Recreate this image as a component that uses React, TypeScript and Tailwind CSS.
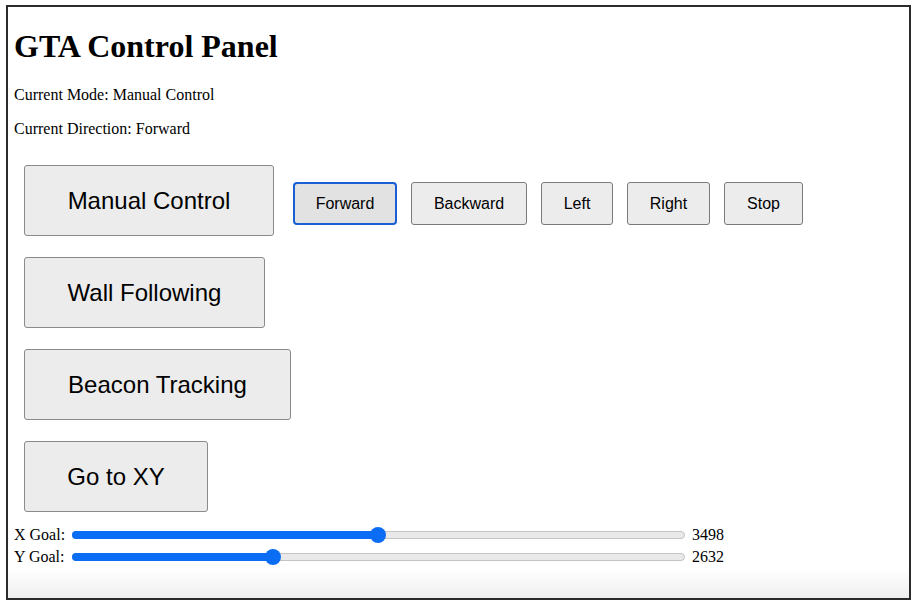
import { useState } from 'react';

interface GoalSlider {
  label: string;
  value: number;
  max: number;
}

const modes = [
  { label: 'Manual Control', width: 'w-[250px]' },
  { label: 'Wall Following', width: 'w-[241px]' },
  { label: 'Beacon Tracking', width: 'w-[267px]' },
  { label: 'Go to XY', width: 'w-[184px]' },
];

const directions = [
  { label: 'Forward', width: 'w-[104px]' },
  { label: 'Backward', width: 'w-[116px]' },
  { label: 'Left', width: 'w-[72px]' },
  { label: 'Right', width: 'w-[83px]' },
  { label: 'Stop', width: 'w-[79px]' },
];

const goals: GoalSlider[] = [
  { label: 'X Goal:', value: 3498, max: 7000 },
  { label: 'Y Goal:', value: 2632, max: 8150 },
];

const TRACK_W = 613;
const THUMB = 16;

function Slider({ value, max }: { value: number; max: number }) {
  const center = THUMB / 2 + (value / max) * (TRACK_W - THUMB);
  return (
    <div className="relative ml-[7px] h-[8px] w-[613px] shrink-0 rounded-full border border-[#c4c4c4] bg-[#e9e9e9]">
      <div
        className="absolute -left-px -top-px h-[8px] rounded-full bg-[#0b6cf4]"
        style={{ width: center }}
      />
      <div
        className="absolute top-1/2 h-[16px] w-[16px] -translate-x-1/2 -translate-y-1/2 rounded-full bg-[#0b6cf4]"
        style={{ left: center - 1 }}
      />
    </div>
  );
}

export default function App() {
  const [mode, setMode] = useState('Manual Control');
  const [direction, setDirection] = useState('Forward');

  return (
    <div className="h-[604px] w-[917px] bg-white pl-[6px] pt-[5px] font-['Liberation_Serif',serif] text-black">
      <div className="flex h-[595px] w-[905px] flex-col border-2 border-[#2b2b2b]">
        <div className="pl-[6px]">
          <h1 className="mt-[21px] mb-[21px] text-[32px] font-bold leading-[37px]">GTA Control Panel</h1>
          <p className="text-[16px] leading-[18px]">Current Mode: {mode}</p>
          <p className="mt-[16px] text-[16px] leading-[18px]">Current Direction: {direction}</p>

          <div className="mt-[27px] ml-[10px] flex flex-col gap-[21px] font-['Liberation_Sans',Arial,sans-serif]">
            {modes.map((m, idx) => (
              <div key={m.label} className="flex items-start">
                <button
                  onClick={() => setMode(m.label)}
                  className={`${m.width} h-[71px] rounded-[3px] border border-[#8a8a8a] bg-[#ececec] text-center text-[24px] leading-[28px]`}
                >
                  {m.label}
                </button>
                {idx === 0 && (
                  <div className="mt-[17px] ml-[19px] flex gap-[14px]">
                    {directions.map((d) => {
                      const active = d.label === direction;
                      return (
                        <button
                          key={d.label}
                          onClick={() => setDirection(d.label)}
                          className={`${d.width} h-[43px] text-center text-[16px] leading-[18px] ${
                            active
                              ? 'rounded-[4px] border-2 border-[#1a5fd4] bg-[#e2e2e2]'
                              : 'rounded-[3px] border border-[#7a7a7a] bg-[#ececec]'
                          }`}
                        >
                          {d.label}
                        </button>
                      );
                    })}
                  </div>
                )}
              </div>
            ))}
          </div>

          <div className="mt-[12px] flex flex-col">
            {goals.map((g) => (
              <div key={g.label} className="flex h-[22px] items-center whitespace-nowrap text-[16px] leading-[18px]">
                <span className="w-[51px] shrink-0">{g.label}</span>
                <Slider value={g.value} max={g.max} />
                <span className="ml-[7px]">{g.value}</span>
              </div>
            ))}
          </div>
        </div>
        <div className="flex-1 bg-gradient-to-b from-white to-[#efefef]" />
      </div>
    </div>
  );
}
